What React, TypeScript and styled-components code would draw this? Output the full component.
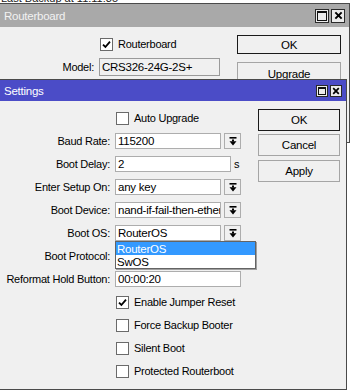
import React from "react";
import styled, { createGlobalStyle } from "styled-components";

const Global = createGlobalStyle`
  html, body { margin: 0; padding: 0; background: #ffffff; }
  body { font-family: "Liberation Sans", Arial, sans-serif; font-size: 11px; color: #000; }
  * { box-sizing: border-box; }
`;

const Desktop = styled.div`
  position: relative;
  width: 351px;
  height: 392px;
  overflow: hidden;
  background: #ffffff;
`;

const BackText = styled.div`
  position: absolute;
  top: -8px;
  left: 1px;
  font-size: 11px;
  line-height: 12px;
  color: #222;
  white-space: nowrap;
`;

const Win = styled.div<{ $top: number; $left: number; $w: number; $h: number }>`
  position: absolute;
  top: ${(p) => p.$top}px;
  left: ${(p) => p.$left}px;
  width: ${(p) => p.$w}px;
  height: ${(p) => p.$h}px;
  background: #f0f0f0;
  border: 1px solid #4a4a4a;
  display: flex;
  flex-direction: column;
  letter-spacing: -0.25px;
`;

const TitleBar = styled.div<{ $active?: boolean; $h: number }>`
  height: ${(p) => p.$h}px;
  flex: none;
  background: ${(p) => (p.$active ? "#4b4cc7" : "#a9a9a9")};
  color: ${(p) => (p.$active ? "#ffffff" : "#f2f2f2")};
  display: flex;
  align-items: center;
  padding: 0 4px 0 4px;
  font-size: 11.5px;
`;

const TitleText = styled.span`
  flex: 1;
`;

const TitleButtons = styled.div`
  display: flex;
  gap: 2px;
`;

const TitleBtn = styled.div<{ $size: number }>`
  width: ${(p) => p.$size}px;
  height: ${(p) => p.$size}px;
  background: #ececec;
  border: 1px solid #2a2a2a;
  display: flex;
  align-items: center;
  justify-content: center;
`;

const MaxGlyph = styled.div<{ $size: number }>`
  width: ${(p) => p.$size}px;
  height: ${(p) => p.$size}px;
  border: 1px solid #111;
  border-top-width: 2px;
`;

/* Routerboard window */
const RbBody = styled.div`
  display: flex;
  padding-top: 7px;
`;

const RbForm = styled.div`
  display: grid;
  grid-template-columns: 97px 122px;
  column-gap: 2px;
  row-gap: 5px;
  grid-auto-rows: 18px;
  padding-top: 1px;
`;

const RbButtons = styled.div`
  display: flex;
  flex-direction: column;
  gap: 8px;
  margin-left: 16px;
  width: 104px;
`;

/* Settings window */
const SetBody = styled.div`
  display: flex;
  padding-top: 8px;
`;

const Form = styled.div`
  display: grid;
  grid-template-columns: 113px 142px;
  column-gap: 2px;
  row-gap: 5px;
  grid-auto-rows: 18px;
`;

const Label = styled.div`
  display: flex;
  align-items: center;
  justify-content: flex-end;
  padding-right: 3px;
  white-space: nowrap;
`;

const Field = styled.div`
  position: relative;
  display: flex;
  align-items: center;
  gap: 3px;
`;

const CheckField = styled(Field)`
  grid-column: 2;
  gap: 5px;
  padding-left: 1px;
  white-space: nowrap;
`;

const Input = styled.div<{ $w: number; $ro?: boolean }>`
  width: ${(p) => p.$w}px;
  height: 16px;
  background: ${(p) => (p.$ro ? "#f0f0f0" : "#ffffff")};
  border: 1px solid ${(p) => (p.$ro ? "#9a9a9a" : "#adadad")};
  padding: 0 2px;
  display: flex;
  align-items: center;
  white-space: nowrap;
  overflow: hidden;
  font-size: 11.5px;
`;

const RoInput = styled(Input)`
  height: 18px;
`;

const Drop = styled.div`
  width: 17px;
  height: 16px;
  background: #f0f0f0;
  border: 1px solid #adadad;
  display: flex;
  align-items: center;
  justify-content: center;
`;

const Unit = styled.span`
  padding-left: 0px;
`;

const Box = styled.div`
  width: 13px;
  height: 13px;
  background: #ffffff;
  border: 1px solid #6a6a6a;
  display: flex;
  align-items: center;
  justify-content: center;
  flex: none;
`;

const Buttons = styled.div`
  display: flex;
  flex-direction: column;
  gap: 3px;
  margin-left: 1px;
  width: 82px;
`;

const Button = styled.div<{ $def?: boolean; $h?: number; $mt?: number }>`
  height: ${(p) => p.$h ?? 22}px;
  margin-top: ${(p) => p.$mt ?? 0}px;
  background: #f0f0f0;
  border: 1px solid ${(p) => (p.$def ? "#1a1a1a" : "#a5a5a5")};
  display: flex;
  align-items: center;
  justify-content: center;
  font-size: 11.5px;
`;

const List = styled.div`
  position: absolute;
  top: 17px;
  left: 0;
  width: 141px;
  background: #ffffff;
  border: 1px solid #646464;
  box-shadow: 1px 1px 0 #a0a0a0;
  z-index: 5;
  display: flex;
  flex-direction: column;
`;

const ListItem = styled.div<{ $sel?: boolean }>`
  height: 13px;
  padding-left: 1px;
  display: flex;
  align-items: center;
  background: ${(p) => (p.$sel ? "#3399ff" : "#ffffff")};
  color: ${(p) => (p.$sel ? "#ffffff" : "#000000")};
  font-size: 11.5px;
`;

const Arrow = () => (
  <svg width="8" height="9" viewBox="0 0 8 9">
    <rect x="0.5" y="0" width="7" height="1.6" fill="#000" />
    <rect x="3" y="2.5" width="2" height="2" fill="#000" />
    <polygon points="0.5,4.3 7.5,4.3 4,8.6" fill="#000" />
  </svg>
);

const Check = () => (
  <svg width="9" height="9" viewBox="0 0 9 9">
    <path d="M1 4.6 L3.4 7 L8 1.6" stroke="#000" strokeWidth="1.8" fill="none" />
  </svg>
);

const CloseGlyph = ({ s }: { s: number }) => (
  <svg width={s} height={s} viewBox="0 0 10 10">
    <path d="M1.5 1.5 L8.5 8.5 M8.5 1.5 L1.5 8.5" stroke="#000" strokeWidth="2.2" />
  </svg>
);

const CheckBox = ({ checked }: { checked?: boolean }) => <Box>{checked ? <Check /> : null}</Box>;

export default function App() {
  return (
    <>
      <Global />
      <Desktop>
        <BackText>Last Backup at 11:11:35</BackText>

        <Win $top={3} $left={-1} $w={351} $h={140}>
          <TitleBar $h={23}>
            <TitleText>Routerboard</TitleText>
            <TitleButtons>
              <TitleBtn $size={14}>
                <MaxGlyph $size={10} />
              </TitleBtn>
              <TitleBtn $size={14}>
                <CloseGlyph s={9} />
              </TitleBtn>
            </TitleButtons>
          </TitleBar>
          <RbBody>
            <RbForm>
              <CheckField>
                <CheckBox checked />
                <span>Routerboard</span>
              </CheckField>
              <Label>Model:</Label>
              <Field>
                <RoInput $w={121} $ro>
                  CRS326-24G-2S+
                </RoInput>
              </Field>
            </RbForm>
            <RbButtons>
              <Button $def $h={19} $mt={1}>
                OK
              </Button>
              <Button $h={24}>Upgrade</Button>
            </RbButtons>
          </RbBody>
        </Win>

        <Win $top={79} $left={-1} $w={348} $h={311}>
          <TitleBar $active $h={21}>
            <TitleText>Settings</TitleText>
            <TitleButtons>
              <TitleBtn $size={12}>
                <MaxGlyph $size={8} />
              </TitleBtn>
              <TitleBtn $size={12}>
                <CloseGlyph s={8} />
              </TitleBtn>
            </TitleButtons>
          </TitleBar>
          <SetBody>
            <Form>
              <CheckField>
                <CheckBox />
                <span>Auto Upgrade</span>
              </CheckField>

              <Label>Baud Rate:</Label>
              <Field>
                <Input $w={106}>115200</Input>
                <Drop>
                  <Arrow />
                </Drop>
              </Field>

              <Label>Boot Delay:</Label>
              <Field>
                <Input $w={116}>2</Input>
                <Unit>s</Unit>
              </Field>

              <Label>Enter Setup On:</Label>
              <Field>
                <Input $w={106}>any key</Input>
                <Drop>
                  <Arrow />
                </Drop>
              </Field>

              <Label>Boot Device:</Label>
              <Field>
                <Input $w={106}>nand-if-fail-then-ethernet</Input>
                <Drop>
                  <Arrow />
                </Drop>
              </Field>

              <Label>Boot OS:</Label>
              <Field>
                <Input $w={106}>RouterOS</Input>
                <Drop>
                  <Arrow />
                </Drop>
                <List>
                  <ListItem $sel>RouterOS</ListItem>
                  <ListItem>SwOS</ListItem>
                </List>
              </Field>

              <Label>Boot Protocol:</Label>
              <Field>
                <Input $w={106} />
                <Drop>
                  <Arrow />
                </Drop>
              </Field>

              <Label>Reformat Hold Button:</Label>
              <Field>
                <Input $w={126}>00:00:20</Input>
              </Field>

              <CheckField>
                <CheckBox checked />
                <span>Enable Jumper Reset</span>
              </CheckField>
              <CheckField>
                <CheckBox />
                <span>Force Backup Booter</span>
              </CheckField>
              <CheckField>
                <CheckBox />
                <span>Silent Boot</span>
              </CheckField>
              <CheckField>
                <CheckBox />
                <span>Protected Routerboot</span>
              </CheckField>
            </Form>
            <Buttons>
              <Button $def>OK</Button>
              <Button>Cancel</Button>
              <Button $mt={1}>Apply</Button>
            </Buttons>
          </SetBody>
        </Win>
      </Desktop>
    </>
  );
}
